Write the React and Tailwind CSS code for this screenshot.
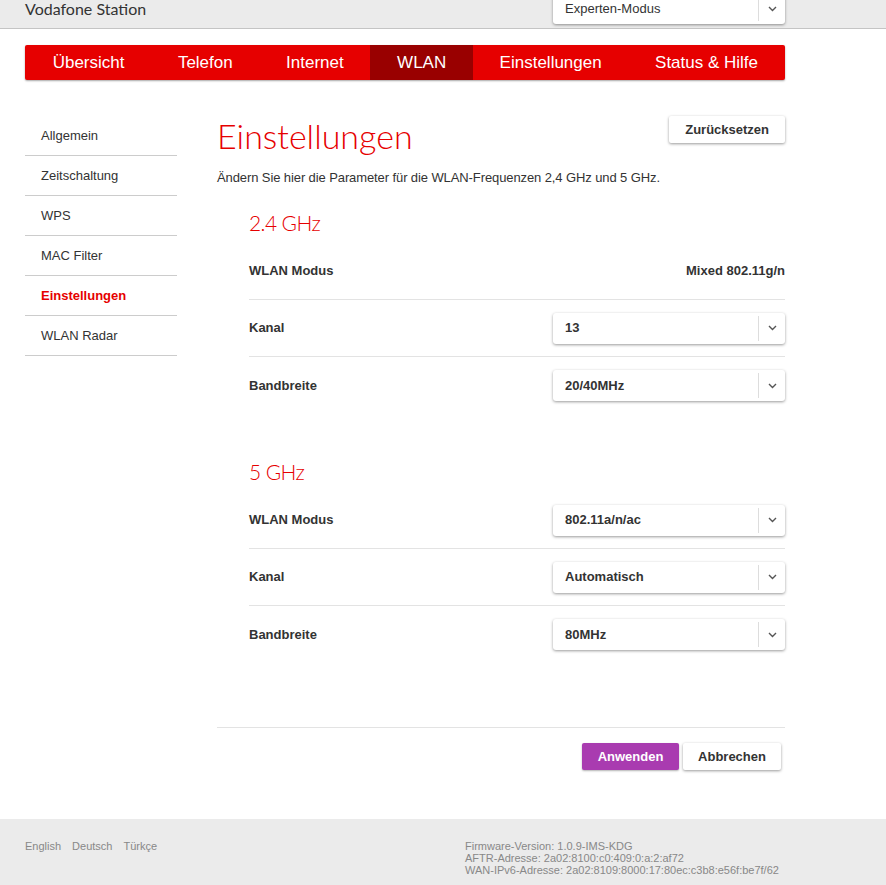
import React from 'react';

const sans = { fontFamily: '"Liberation Sans", Arial, sans-serif' };

const Chevron = () => (
  <svg width="9" height="6" viewBox="0 0 9 6" fill="none">
    <path d="M1 1l3.5 3.5L8 1" stroke="#555" strokeWidth="1.4" />
  </svg>
);

const Select = ({ value, bold = true, className = '' }) => (
  <div className={`flex h-[31px] w-[232px] items-center rounded-[3px] bg-white shadow-[0_1px_3px_rgba(0,0,0,0.4)] ${className}`}>
    <span className={`flex-1 pl-3 text-[13px] text-[#333] ${bold ? 'font-bold' : ''}`}>{value}</span>
    <span className="flex h-[25px] w-[27px] items-center justify-center border-l border-[#ddd]">
      <Chevron />
    </span>
  </div>
);

const navItems = ['Übersicht', 'Telefon', 'Internet', 'WLAN', 'Einstellungen', 'Status & Hilfe'];
const sideItems = ['Allgemein', 'Zeitschaltung', 'WPS', 'MAC Filter', 'Einstellungen', 'WLAN Radar'];

const Row = ({ label, children, last }) => (
  <div className={`flex h-[57px] items-center justify-between ${last ? '' : 'border-b border-[#e3e3e3]'}`}>
    <span className="text-[13px] font-bold text-[#333]">{label}</span>
    {children}
  </div>
);

const Section = ({ title, className = '', rows }) => (
  <div className={`pl-8 ${className}`}>
    <h2 className="text-[21px] font-light leading-[40px] tracking-[-0.6px] text-[#e60000]" style={{ fontFamily: 'Lato, sans-serif' }}>
      {title}
    </h2>
    {rows.map((r, i) => (
      <Row key={r.label} label={r.label} last={i === rows.length - 1}>
        {r.select ? <Select value={r.value} /> : <span className="text-[13px] font-bold text-[#333]">{r.value}</span>}
      </Row>
    ))}
  </div>
);

export default function App() {
  return (
    <div className="min-h-screen bg-white text-[#333]" style={sans}>
      {/* top bar */}
      <div className="h-[29px] overflow-hidden border-b border-[#c4c4c4] bg-[#ebebeb]">
        <div className="ml-[25px] flex w-[760px] items-start justify-between">
          <span className="text-[16px] leading-[18px] text-[#333]" style={{ fontFamily: 'Lato, sans-serif' }}>
            Vodafone Station
          </span>
          <Select value="Experten-Modus" bold={false} className="-mt-[7px]" />
        </div>
      </div>

      {/* main nav */}
      <nav className="ml-[25px] mt-4 flex h-[35px] w-[760px] overflow-hidden rounded-[2px] bg-[#e60000] pl-px shadow-[0_1px_2px_rgba(0,0,0,0.35)]">
        {navItems.map((item) => (
          <span
            key={item}
            className={`whitespace-nowrap px-[26.7px] text-[17px] leading-[35px] text-white ${item === 'WLAN' ? 'bg-[#990000]' : ''}`}
          >
            {item}
          </span>
        ))}
      </nav>

      <div className="ml-[25px] mt-[36px] flex w-[760px] gap-10">
        {/* side nav */}
        <aside className="w-[152px] shrink-0">
          {sideItems.map((item) => (
            <div
              key={item}
              className={`flex h-[40px] items-center border-b border-[#ccc] pl-4 text-[13px] ${
                item === 'Einstellungen' ? 'font-bold text-[#e60000]' : 'text-[#333]'
              }`}
            >
              {item}
            </div>
          ))}
        </aside>

        {/* content */}
        <main className="flex-1">
          <div className="flex items-start justify-between">
            <h1 className="text-[34px] font-light leading-[40px] text-[#e60000]" style={{ fontFamily: 'Lato, sans-serif' }}>
              Einstellungen
            </h1>
            <button className="h-[27px] rounded-[2px] bg-white px-4 text-[13px] font-bold text-[#333] shadow-[0_1px_3px_rgba(0,0,0,0.4)]">
              Zurücksetzen
            </button>
          </div>
          <p className="mt-[13px] text-[13px] leading-[18px] tracking-[-0.1px]">
            Ändern Sie hier die Parameter für die WLAN-Frequenzen 2,4 GHz und 5 GHz.
          </p>

          <Section
            title="2.4 GHz"
            className="mt-4"
            rows={[
              { label: 'WLAN Modus', value: 'Mixed 802.11g/n' },
              { label: 'Kanal', value: '13', select: true },
              { label: 'Bandbreite', value: '20/40MHz', select: true },
            ]}
          />
          <Section
            title="5 GHz"
            className="mt-[38px]"
            rows={[
              { label: 'WLAN Modus', value: '802.11a/n/ac', select: true },
              { label: 'Kanal', value: 'Automatisch', select: true },
              { label: 'Bandbreite', value: '80MHz', select: true },
            ]}
          />

          <div className="mt-16 border-t border-[#e3e3e3] pt-[15px]">
            <div className="flex justify-end gap-1 pr-1">
              <button className="h-[27px] w-[97px] rounded-[2px] bg-[#a93bb0] text-[13px] font-bold text-white shadow-[0_1px_2px_rgba(0,0,0,0.3)]">
                Anwenden
              </button>
              <button className="h-[27px] w-[98px] rounded-[2px] bg-white text-[13px] font-bold text-[#333] shadow-[0_1px_3px_rgba(0,0,0,0.4)]">
                Abbrechen
              </button>
            </div>
          </div>
        </main>
      </div>

      {/* footer */}
      <footer className="mt-[49px] bg-[#ebebeb] pb-5 pt-[21px]">
        <div className="ml-[25px] flex w-[760px] text-[11px] leading-[12px] text-[#888]">
          <div className="flex w-[440px] gap-[11px]">
            <span>English</span>
            <span>Deutsch</span>
            <span>Türkçe</span>
          </div>
          <div>
            <div>Firmware-Version: 1.0.9-IMS-KDG</div>
            <div>AFTR-Adresse: 2a02:8100:c0:409:0:a:2:af72</div>
            <div>WAN-IPv6-Adresse: 2a02:8109:8000:17:80ec:c3b8:e56f:be7f/62</div>
          </div>
        </div>
      </footer>
    </div>
  );
}
